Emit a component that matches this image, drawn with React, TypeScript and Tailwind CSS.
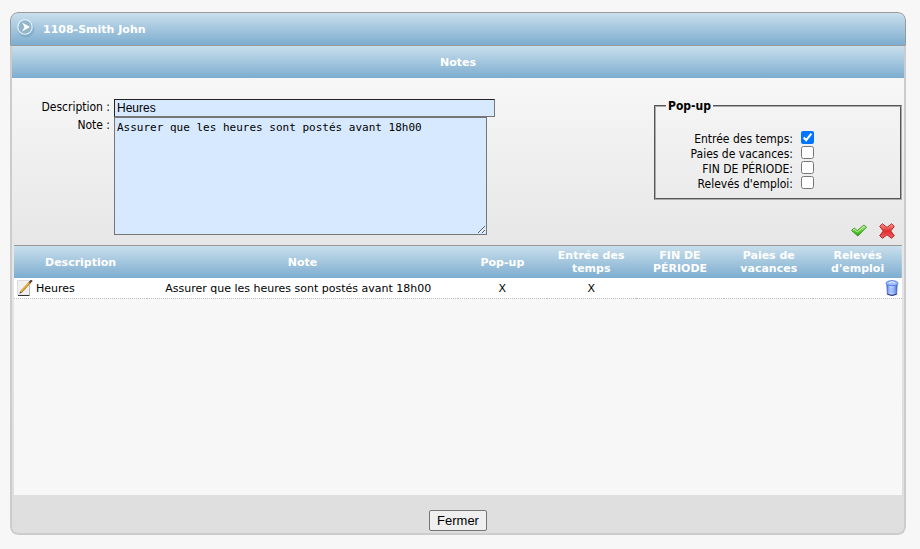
import { useState } from "react";

const columns = [
  { title: "Description", width: "w-[15%]" },
  { title: "Note", width: "w-[35%]" },
  { title: "Pop-up", width: "w-[10%]" },
  { title: "Entrée des temps", width: "w-[10%]" },
  { title: "FIN DE PÉRIODE", width: "w-[10%]" },
  { title: "Paies de vacances", width: "w-[10%]" },
  { title: "Relevés d'emploi", width: "w-[10%]" },
];

const popupOptions = [
  { id: "temps", label: "Entrée des temps:" },
  { id: "vacances", label: "Paies de vacances:" },
  { id: "periode", label: "FIN DE PÉRIODE:" },
  { id: "emploi", label: "Relevés d'emploi:" },
];

function ArrowBadge() {
  return (
    <svg className="size-5 shrink-0" viewBox="0 0 20 20" aria-hidden="true">
      <circle cx="11" cy="11" r="8.5" fill="#4d7f9e" opacity=".25" />
      <circle cx="10" cy="9" r="7.2" fill="#92b5c9" stroke="#eaf4fa" strokeWidth="1.1" />
      <path d="M7 4.5 15 9 7 13.5 9.5 9Z" fill="#fff" />
    </svg>
  );
}

function CheckIcon() {
  return (
    <svg className="size-4" viewBox="0 0 16 16" aria-hidden="true">
      <defs>
        <linearGradient id="green" x1="0" y1="0" x2="0" y2="1">
          <stop offset="0" stopColor="#b6f18c" />
          <stop offset=".6" stopColor="#55c928" />
          <stop offset="1" stopColor="#249513" />
        </linearGradient>
      </defs>
      <path d="M.5 7.4 3.2 5 6.2 7.6 13 2 15.6 4.2 6.8 13Z" fill="url(#green)" stroke="#3b8f2b" strokeWidth=".9" strokeLinejoin="round" />
      <path d="M2 7.2 3.2 6.2 6.3 8.9 13.2 3.2" fill="none" stroke="#dcfac6" strokeWidth=".8" />
    </svg>
  );
}

function CrossIcon() {
  return (
    <svg className="size-4" viewBox="0 0 16 16" aria-hidden="true">
      <defs>
        <linearGradient id="red" x1="0" y1="0" x2="0" y2="1">
          <stop offset="0" stopColor="#f8a08f" />
          <stop offset=".5" stopColor="#e02c2c" />
          <stop offset="1" stopColor="#f0656a" />
        </linearGradient>
      </defs>
      <path d="M3.4.8 8 4.4 12.6.8 15.3 3.4 11.7 8 15.3 12.6 12.6 15.3 8 11.8 3.4 15.3.7 12.6 4.3 8 .7 3.4Z" fill="url(#red)" stroke="#b8242c" strokeWidth="1" strokeLinejoin="round" />
    </svg>
  );
}

function EditIcon() {
  return (
    <svg className="size-4" viewBox="0 0 16 16" aria-hidden="true">
      <path d="M.5.5h12v14.5H.5Z" fill="#f1f1f1" stroke="#dcdcdc" strokeWidth="1" />
      <path d="M1 15.5h11.5" stroke="#333" strokeWidth="1" />
      <path d="M12.6 5v10" stroke="#aaa" strokeWidth=".8" />
      <path d="M4 12 13 2.2" stroke="#a86a10" strokeWidth="2.2" />
      <path d="M4 11.6 12.8 2" stroke="#f3bd3c" strokeWidth="1.2" />
      <path d="M12.4 2.8 14.9.2" stroke="#5a3a2a" strokeWidth="2" />
      <path d="M2.2 13.8 3.2 11.4 4.8 12.8Z" fill="#444" />
    </svg>
  );
}

function TrashIcon() {
  return (
    <svg className="size-4" viewBox="0 0 16 16" aria-hidden="true">
      <defs>
        <linearGradient id="bin" x1="0" y1="0" x2="1" y2="0">
          <stop offset="0" stopColor="#4f78ea" />
          <stop offset=".35" stopColor="#cfe3ff" />
          <stop offset=".65" stopColor="#a9c8ff" />
          <stop offset="1" stopColor="#3f62d0" />
        </linearGradient>
      </defs>
      <path d="M2.8 4.5 3.4 14.2Q8 16.4 12.6 14.2L13.2 4.5Z" fill="url(#bin)" stroke="#3f62cc" strokeWidth=".8" />
      <path d="M5.8 7 6.2 13M8 7.4V13.5M10.2 7 9.8 13" stroke="#6f93f2" strokeWidth=".7" />
      <ellipse cx="8" cy="3.2" rx="6" ry="2.5" fill="#9dc0ff" stroke="#4a72e0" strokeWidth=".9" />
      <path d="M5 3Q8 .4 11 3" fill="none" stroke="#eef5ff" strokeWidth="1" />
      <path d="M3.4 14.3Q8 16.6 12.6 14.3" fill="none" stroke="#26357a" strokeWidth="1" />
    </svg>
  );
}

export default function App() {
  const [checked, setChecked] = useState<Record<string, boolean>>({ temps: true });

  return (
    <div className="min-h-screen bg-[#f7f7f7] pt-3 pr-3.5 pb-3.5 pl-2.5 font-['DejaVu_Sans',Verdana,sans-serif] text-[11px] leading-[13px] text-black">
      <main className="overflow-hidden rounded-lg">
        <header className="flex h-[34px] items-start gap-2 rounded-t-lg border border-[#999] bg-linear-to-b from-[#c9dfec] to-[#7dadcf] pt-[5px] pl-1">
          <ArrowBadge />
          <h1 className="pt-[5px] font-bold text-white">1108-Smith John</h1>
        </header>

        <div className="rounded-b-lg border-x-2 border-b-2 border-[#ccc] bg-linear-to-b from-[#fafafa] via-[#e7e7e7] via-40% to-[#dfdfdf] to-80%">
          <h2 className="flex h-8 items-center justify-center bg-linear-to-b from-[#c9dfec] to-[#7dadcf] font-bold text-white">
            Notes
          </h2>

          <div className="flex items-start justify-between pt-[21px] pr-0.5 font-['DejaVu_Sans_Condensed','DejaVu_Sans',Tahoma,sans-serif] text-[12px] leading-[15px]">
            <div className="grid grid-cols-[98px_1fr] gap-x-1">
              <label htmlFor="description" className="text-right leading-[16px]">Description :</label>
              <input
                id="description"
                defaultValue="Heures"
                className="h-[18px] w-[381px] border border-[#767676] border-t-[#222] border-l-[#222] bg-[#d7e9ff] px-0.5 font-['Liberation_Sans',Arial,sans-serif] text-[12px] outline-none"
              />
              <label htmlFor="note" className="text-right leading-[16px]">Note :</label>
              <textarea
                id="note"
                defaultValue="Assurer que les heures sont postés avant 18h00"
                className="block h-[118px] w-[373px] border border-[#767676] bg-[#d7e9ff] px-0.5 py-[3px] font-['DejaVu_Sans_Mono',monospace] text-[11px] leading-[13px] outline-none"
              />
            </div>

            <div className="flex w-[248px] flex-col">
              <fieldset className="h-[101px] border-2 border-[#aaa] px-2.5 [border-style:groove]">
                <legend className="px-0.5 pt-px leading-[13px] font-bold">Pop-up</legend>
                <div className="flex flex-col pt-[17px]">
                  {popupOptions.map((o) => (
                    <div key={o.id} className="flex h-[15px] items-center gap-2">
                      <label htmlFor={o.id} className="w-[127px] pt-1 text-right">{o.label}</label>
                      <input
                        id={o.id}
                        type="checkbox"
                        className="size-[13px]"
                        checked={!!checked[o.id]}
                        onChange={(e) => setChecked({ ...checked, [o.id]: e.target.checked })}
                      />
                    </div>
                  ))}
                </div>
              </fieldset>
              <div className="flex justify-end gap-3 pt-[23px] pr-[7px]">
                <button type="button" aria-label="Enregistrer"><CheckIcon /></button>
                <button type="button" aria-label="Annuler"><CrossIcon /></button>
              </div>
            </div>
          </div>

          <div className="mx-0.5 mt-1.5 h-[250px] overflow-auto border-t border-[#999] bg-[#f7f7f7]">
            <table className="w-full table-fixed border-separate border-spacing-0">
              <thead>
                <tr className="h-8 bg-linear-to-b from-[#c9dfec] to-[#7dadcf] text-white">
                  {columns.map((c) => (
                    <th key={c.title} scope="col" className={`${c.width} px-2 font-bold`}>{c.title}</th>
                  ))}
                </tr>
              </thead>
              <tbody>
                <tr className="h-[21px] bg-white text-center *:border-b *:border-dotted *:border-[#bbb]">
                  <td className="pl-[3px]">
                    <div className="flex items-center gap-[3px]">
                      <button type="button" aria-label="Modifier"><EditIcon /></button>
                      Heures
                    </div>
                  </td>
                  <td className="pl-[18px] text-left whitespace-nowrap">Assurer que les heures sont postés avant 18h00</td>
                  <td>X</td>
                  <td>X</td>
                  <td></td>
                  <td></td>
                  <td className="pr-[2px]">
                    <div className="flex justify-end">
                      <button type="button" aria-label="Supprimer"><TrashIcon /></button>
                    </div>
                  </td>
                </tr>
              </tbody>
            </table>
          </div>

          <footer className="flex h-[38px] items-end justify-center pb-0.5">
            <button type="button" className="h-[21px] rounded-[2px] border border-[#767676] bg-[#efefef] px-[7px] font-['Liberation_Sans',Arial,sans-serif] text-[13px]">
              Fermer
            </button>
          </footer>
        </div>
      </main>
    </div>
  );
}
